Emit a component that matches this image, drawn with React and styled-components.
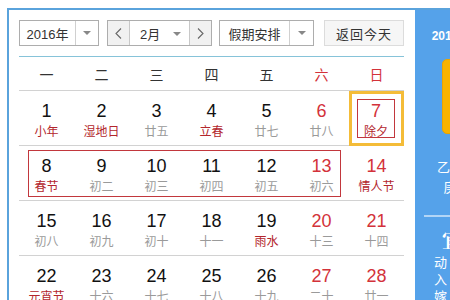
import React from 'react';
import styled, { createGlobalStyle } from 'styled-components';

const GlobalStyle = createGlobalStyle`
  html, body {
    margin: 0;
    padding: 0;
    background: #fff;
    overflow: hidden;
  }
  body {
    font-family: "Liberation Sans", "Noto Sans CJK SC", sans-serif;
  }
  *, *::before, *::after {
    box-sizing: border-box;
  }
`;

const BLUE = '#5aa3dc';
const RED = '#d3323a';
const DARK_RED = '#b3262c';

const Widget = styled.div`
  display: flex;
  margin: 8px 0 0 7px;
  border-top: 2px solid ${BLUE};
  border-left: 2px solid ${BLUE};
  width: 700px;
  height: 320px;
`;

const Calendar = styled.div`
  width: 406px;
  padding: 10px 11px 0 10px;
  background: #fff;
  flex-shrink: 0;
`;

const Toolbar = styled.div`
  display: flex;
  align-items: flex-start;
  height: 37px;
  padding-bottom: 11px;
  border-bottom: 1px solid #86c3d9;
`;

const Select = styled.div`
  display: flex;
  align-items: stretch;
  height: 26px;
  border: 1px solid #adadad;
  background: #fff;
  margin-right: ${p => p.$gap}px;
  font-size: 13px;
  color: #333;
`;

const SelectLabel = styled.div`
  width: ${p => p.$w}px;
  display: flex;
  align-items: center;
  justify-content: center;
`;

const ArrowBox = styled.div`
  width: ${p => p.$w}px;
  display: flex;
  align-items: center;
  justify-content: center;
  border-left: 1px solid #d0d0d0;
  &::after {
    content: '';
    border-left: 4px solid transparent;
    border-right: 4px solid transparent;
    border-top: 4px solid #888;
  }
`;

const NavButton = styled.div`
  width: 22px;
  display: flex;
  align-items: center;
  justify-content: center;
  background: #f1f1f1;
  border-left: ${p => (p.$right ? '1px solid #c8c8c8' : 'none')};
  border-right: ${p => (p.$right ? 'none' : '1px solid #c8c8c8')};
`;

const MonthLabel = styled.div`
  width: 59px;
  display: flex;
  align-items: center;
  padding-left: 10px;
  position: relative;
  &::after {
    content: '';
    position: absolute;
    right: 8px;
    top: 11px;
    border-left: 4px solid transparent;
    border-right: 4px solid transparent;
    border-top: 4px solid #888;
  }
`;

const TodayButton = styled.div`
  width: 80px;
  height: 26px;
  border: 1px solid #dcdcdc;
  background: #f6f6f6;
  display: flex;
  align-items: center;
  justify-content: center;
  font-size: 13px;
  color: #333;
  letter-spacing: 1px;
`;

const WeekHead = styled.div`
  display: grid;
  grid-template-columns: repeat(7, 55px);
  height: 34px;
  border-bottom: 1px solid #d2d2d2;
`;

const WeekDay = styled.div`
  display: flex;
  align-items: center;
  justify-content: center;
  font-size: 14px;
  color: ${p => (p.$weekend ? RED : '#333')};
  padding-top: 1px;
`;

const Row = styled.div`
  display: grid;
  grid-template-columns: repeat(7, 55px);
  grid-template-rows: 54px;
  border-bottom: 1px solid #d2d2d2;
`;

const HolidayBox = styled.div`
  grid-column: 1 / 7;
  grid-row: 1;
  margin: 4px 8px 3px 9px;
  border: 1px solid #c2373d;
`;

const Cell = styled.div`
  grid-column: ${p => p.$col};
  grid-row: 1;
  display: flex;
  flex-direction: column;
  align-items: center;
  padding-top: 10px;
`;

const SelectedCell = styled.div`
  grid-column: 7;
  grid-row: 1;
  border: 3px solid #f4bc38;
  padding: 5px 6px 5px 5px;
  height: 55px;
  margin-bottom: -1px;
  position: relative;
  z-index: 1;
`;

const TodayBox = styled.div`
  height: 100%;
  border: 1px solid #c2373d;
  display: flex;
  flex-direction: column;
  align-items: center;
  padding-top: 1px;
`;

const DayNum = styled.div`
  font-size: 18px;
  line-height: 20px;
  color: ${p => (p.$weekend ? RED : '#111')};
`;

const Lunar = styled.div`
  font-family: "Noto Sans CJK SC", sans-serif;
  font-size: 12px;
  line-height: 17px;
  margin-top: 1px;
  color: ${p => (p.$fest ? DARK_RED : '#9a9a9a')};
`;

const Panel = styled.div`
  width: 134px;
  flex-shrink: 0;
  background: #55a2ea;
  color: #fff;
  display: flex;
  flex-direction: column;
  align-items: center;
  padding-top: 16px;
  font-family: "Noto Sans CJK SC", sans-serif;
`;

const PanelDate = styled.div`
  font-family: "Liberation Sans", "Noto Sans CJK SC", sans-serif;
  font-size: 12px;
  font-weight: bold;
  white-space: nowrap;
`;

const BigDay = styled.div`
  margin-top: 16px;
  width: 80px;
  height: 75px;
  border-radius: 5px;
  background: #f8b300;
  border: 1px solid #e9a400;
  display: flex;
  align-items: center;
  justify-content: center;
  font-family: "Liberation Sans", sans-serif;
  font-size: 46px;
  font-weight: bold;
`;

const LunarInfo = styled.div`
  margin-top: 23px;
  font-size: 13px;
  line-height: 20px;
  text-align: center;
  white-space: nowrap;
  padding-left: 4px;
`;

const Divider = styled.div`
  margin-top: 18px;
  width: 116px;
  height: 2px;
  background: rgba(255, 255, 255, 0.55);
`;

const Almanac = styled.div`
  display: grid;
  grid-template-columns: 1fr 1fr;
  width: 134px;
  padding: 0 0 0 2px;
  margin-top: 10px;
`;

const AlmanacCol = styled.div`
  display: flex;
  flex-direction: column;
  align-items: center;
`;

const AlmanacTitle = styled.div`
  font-family: "Noto Serif CJK SC", "Noto Sans CJK SC", serif;
  font-size: 20px;
  font-weight: bold;
  line-height: 26px;
  padding-left: 4px;
`;

const AlmanacItem = styled.div`
  font-size: 13px;
  line-height: 17px;
  letter-spacing: 6px;
  margin-right: -6px;
`;

const Chevron = ({ right }) => (
  <svg width="7" height="11" viewBox="0 0 7 11">
    <polyline
      points={right ? '1,0.5 6,5.5 1,10.5' : '6,0.5 1,5.5 6,10.5'}
      fill="none"
      stroke="#666"
      strokeWidth="1.1"
    />
  </svg>
);

const weeks = [
  [
    [1, '小年', true], [2, '湿地日', true], [3, '廿五'], [4, '立春', true],
    [5, '廿七'], [6, '廿八'], [7, '除夕', true],
  ],
  [
    [8, '春节', true], [9, '初二'], [10, '初三'], [11, '初四'],
    [12, '初五'], [13, '初六'], [14, '情人节', true],
  ],
  [
    [15, '初八'], [16, '初九'], [17, '初十'], [18, '十一'],
    [19, '雨水', true], [20, '十三'], [21, '十四'],
  ],
  [
    [22, '元宵节', true], [23, '十六'], [24, '十七'], [25, '十八'],
    [26, '十九'], [27, '二十'], [28, '廿一'],
  ],
];

const weekNames = ['一', '二', '三', '四', '五', '六', '日'];

function App() {
  return (
    <>
      <GlobalStyle />
      <Widget>
        <Calendar>
          <Toolbar>
            <Select $gap={8}>
              <SelectLabel $w={55}>2016年</SelectLabel>
              <ArrowBox $w={23} />
            </Select>
            <Select $gap={7}>
              <NavButton><Chevron /></NavButton>
              <MonthLabel>2月</MonthLabel>
              <NavButton $right><Chevron right /></NavButton>
            </Select>
            <Select $gap={10}>
              <SelectLabel $w={69}>假期安排</SelectLabel>
              <ArrowBox $w={24} />
            </Select>
            <TodayButton>返回今天</TodayButton>
          </Toolbar>
          <WeekHead>
            {weekNames.map((w, i) => (
              <WeekDay key={w} $weekend={i >= 5}>{w}</WeekDay>
            ))}
          </WeekHead>
          {weeks.map((week, wi) => (
            <Row key={wi}>
              {wi === 1 && <HolidayBox />}
              {week.map(([d, lunar, fest], i) => {
                const weekend = i >= 5;
                if (d === 7) {
                  return (
                    <SelectedCell key={d}>
                      <TodayBox>
                        <DayNum $weekend>{d}</DayNum>
                        <Lunar $fest>{lunar}</Lunar>
                      </TodayBox>
                    </SelectedCell>
                  );
                }
                return (
                  <Cell key={d} $col={i + 1}>
                    <DayNum $weekend={weekend}>{d}</DayNum>
                    <Lunar $fest={fest}>{lunar}</Lunar>
                  </Cell>
                );
              })}
            </Row>
          ))}
        </Calendar>
        <Panel>
          <PanelDate>2016-02-07 星期日</PanelDate>
          <BigDay>7</BigDay>
          <LunarInfo>
            乙未年 【羊年】<br />
            庚寅月 甲子日
          </LunarInfo>
          <Divider />
          <Almanac>
            <AlmanacCol>
              <AlmanacTitle>宜</AlmanacTitle>
              <AlmanacItem>动土</AlmanacItem>
              <AlmanacItem>入宅</AlmanacItem>
              <AlmanacItem>嫁娶</AlmanacItem>
            </AlmanacCol>
            <AlmanacCol>
              <AlmanacTitle>忌</AlmanacTitle>
              <AlmanacItem>开市</AlmanacItem>
              <AlmanacItem>安葬</AlmanacItem>
              <AlmanacItem>出行</AlmanacItem>
            </AlmanacCol>
          </Almanac>
        </Panel>
      </Widget>
    </>
  );
}

export default App;
